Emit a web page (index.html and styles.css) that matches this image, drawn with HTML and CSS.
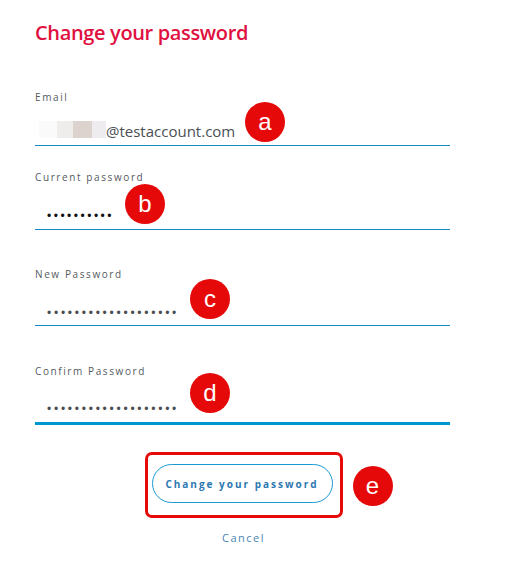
FILE: index.html
```html
<!DOCTYPE html>
<html>
<head>
<meta charset="utf-8">
<link rel="stylesheet" href="styles.css">
</head>
<body>
<div class="page">
  <h1 class="title">Change your password</h1>
  <form class="form">
    <div class="field field-email">
      <div class="label">Email</div>
      <div class="input">
        <span class="blur"><i class="b1"></i><i class="b2"></i><i class="b3"></i><i class="b4"></i></span><span class="value">@testaccount.com</span>
        <span class="badge badge-a">a</span>
      </div>
    </div>
    <div class="field field-current">
      <div class="label">Current password</div>
      <div class="input">
        <span class="dots dots-dark">••••••••••</span>
        <span class="badge badge-b">b</span>
      </div>
    </div>
    <div class="field field-new">
      <div class="label">New Password</div>
      <div class="input">
        <span class="dots">•••••••••••••••••••</span>
        <span class="badge badge-c">c</span>
      </div>
    </div>
    <div class="field field-confirm">
      <div class="label">Confirm Password</div>
      <div class="input input-focus">
        <span class="dots">•••••••••••••••••••</span>
        <span class="badge badge-d">d</span>
      </div>
    </div>
    <div class="actions">
      <div class="highlight">
        <button type="button" class="btn">Change your password</button>
        <span class="badge badge-e">e</span>
      </div>
      <a class="cancel">Cancel</a>
    </div>
  </form>
</div>
</body>
</html>
```
FILE: styles.css
```css
html, body {
  margin: 0;
  padding: 0;
  background: #ffffff;
}
.page {
  padding: 21px 0 0 35px;
  width: 415px;
  font-family: "Open Sans", "Liberation Sans", sans-serif;
}
.title {
  margin: 0;
  font-size: 20px;
  line-height: 24px;
  font-weight: 600;
  letter-spacing: -0.35px;
  color: #e0103f;
}
.form {
  display: flex;
  flex-direction: column;
}
.field {
  display: flex;
  flex-direction: column;
}
.label {
  font-size: 10px;
  line-height: 12px;
  letter-spacing: 1.6px;
  color: #555a60;
}
.input {
  position: relative;
  display: flex;
  align-items: flex-end;
  border-bottom: 1px solid #1689c2;
  padding-left: 4px;
}
.input-focus {
  border-bottom: 3px solid #0096d0;
}
.field-email { margin-top: 46px; }
.field-email .input { height: 42px; }
.field-current { margin-top: 25px; }
.field-current .input { height: 46px; }
.field-new { margin-top: 38px; }
.field-new .input { height: 45px; }
.field-confirm { margin-top: 39px; }
.field-confirm .input { height: 45px; }

.blur {
  display: flex;
  height: 17px;
  margin-bottom: 7px;
}
.blur i { display: block; height: 17px; }
.blur .b1 { width: 18px; background: #fafafa; }
.blur .b2 { width: 16px; background: #eeedec; }
.blur .b3 { width: 19px; background: #ddd3ce; }
.blur .b4 { width: 14px; background: #efecf0; }
.value {
  font-size: 15px;
  line-height: 20px;
  color: #4a4f55;
  margin-bottom: 4px;
}
.dots {
  font-family: "Liberation Sans", sans-serif;
  font-size: 12px;
  line-height: 14px;
  letter-spacing: 2.75px;
  color: #4a4d52;
  margin-left: 8px;
  margin-bottom: 6px;
}
.field-new .dots { margin-bottom: 5px; }
.dots-dark { color: #111111; letter-spacing: 2.5px; }

.badge {
  position: absolute;
  width: 40px;
  height: 40px;
  border-radius: 50%;
  background: #e50909;
  color: #ffffff;
  font-family: "Liberation Sans", Arial, sans-serif;
  font-size: 24px;
  line-height: 40px;
  text-align: center;
}
.badge-a { left: 210px; top: -1px; }
.badge-b { left: 90px; top: 1px; }
.badge-c { left: 155px; top: -1px; }
.badge-d { left: 155px; top: -4px; }
.badge-e { left: 205px; top: 11px; }

.actions {
  display: flex;
  flex-direction: column;
  align-items: center;
  margin-top: 27px;
  padding-left: 2px;
}
.highlight {
  position: relative;
  border: 3px solid #e50909;
  border-radius: 7px;
  padding: 9px 7px 12px 4px;
}
.btn {
  display: block;
  width: 181px;
  height: 39px;
  border: 1px solid #1a9ad2;
  border-radius: 20px;
  background: #ffffff;
  color: #2c78b0;
  font-family: "Open Sans", "Liberation Sans", sans-serif;
  font-size: 10px;
  font-weight: 700;
  letter-spacing: 2px;
  padding: 0;
}
.cancel {
  margin-top: 13px;
  font-size: 11px;
  line-height: 14px;
  letter-spacing: 1.5px;
  color: #4a86b3;
}
```
